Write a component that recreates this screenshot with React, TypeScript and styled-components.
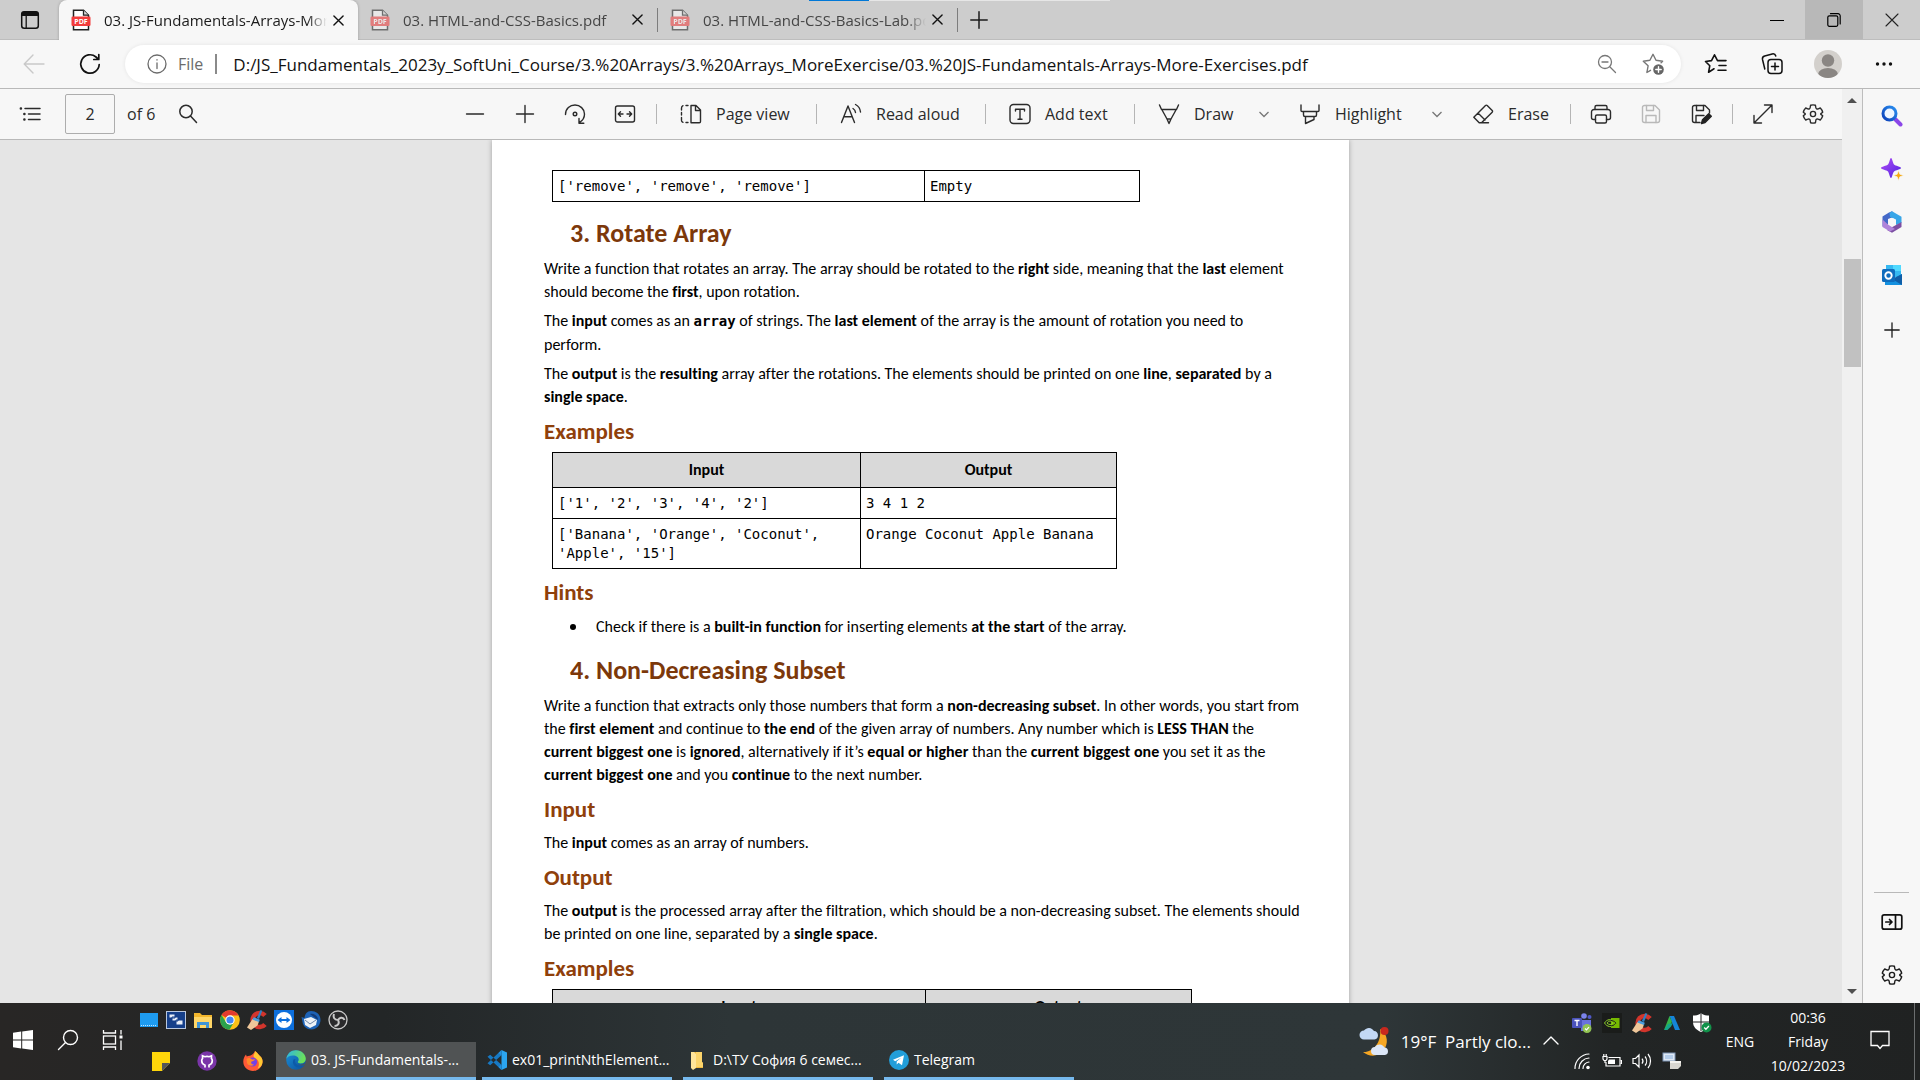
import React from 'react';
import styled, { createGlobalStyle, css } from 'styled-components';

const UI = '"Segoe UI", "Open Sans", "Noto Sans", sans-serif';
const DOC = 'Calibri, Lato, "Open Sans", sans-serif';
const MONO = 'Consolas, "DejaVu Sans Mono", monospace';

const GlobalStyle = createGlobalStyle`
  * { box-sizing: border-box; }
  body { margin: 0; font-family: ${UI}; color: #1b1b1b; background: #f7f7f7; }
  button, input { font: inherit; color: inherit; border: 0; background: none; padding: 0; margin: 0; outline: none; }
  svg { display: block; flex: none; }
`;

const Screen = styled.div`
  height: 100vh;
  display: flex;
  flex-direction: column;
  overflow: hidden;
`;

/* ---------- tab strip ---------- */

const TabStrip = styled.header`
  position: relative;
  flex: none;
  display: flex;
  height: 40px;
  background: #cdcdcd;
  border-bottom: 1px solid #bdbdbd;
`;

const LoadingBar = styled.div`
  position: absolute;
  top: 0;
  left: 809px;
  width: 301px;
  height: 1px;
  background: linear-gradient(to right, #0078d7 60px, #e6e6e6 60px);
`;

const StripButton = styled.button<{ $w: number; $active?: boolean }>`
  width: ${p => p.$w}px;
  height: 39px;
  flex: none;
  display: grid;
  place-items: center;
  ${p => p.$active && css`background: #b8b8b8;`}
`;

const Tab = styled.div<{ $active?: boolean }>`
  display: flex;
  align-items: center;
  flex: 0 1 299px;
  min-width: 0;
  height: ${p => (p.$active ? 40 : 39)}px;
  padding: 0 9px 0 12px;
  font-size: 15px;
  color: ${p => (p.$active ? '#1b1b1b' : '#454545')};
  ${p => p.$active && css`
    background: #f7f7f7;
    border-radius: 8px 8px 0 0;
    box-shadow: 0 0 3px rgba(0, 0, 0, 0.25);
    clip-path: inset(0 -4px 0 -4px);
  `}
  & > svg { opacity: ${p => (p.$active ? 1 : 0.55)}; }
`;

const TabTitle = styled.span`
  flex: 1;
  min-width: 0;
  margin-left: 13px;
  overflow: hidden;
  white-space: nowrap;
  mask-image: linear-gradient(to right, #000 calc(100% - 20px), transparent);
`;

const TabClose = styled.button`
  width: 22px;
  height: 22px;
  display: grid;
  place-items: center;
  color: #111;
`;

const TabDivider = styled.i`
  width: 1px;
  height: 24px;
  align-self: center;
  background: #7d7d7d;
`;

const Spacer = styled.div`
  flex: 1;
`;

/* ---------- address row ---------- */

const AddressRow = styled.div`
  flex: none;
  display: flex;
  align-items: center;
  height: 49px;
  padding: 0 8px 0 6px;
  background: #f7f7f7;
  border-bottom: 1px solid #b9b9b9;
`;

const NavButton = styled.button`
  width: 56px;
  height: 40px;
  flex: none;
  display: grid;
  place-items: center;
`;

const AddressBar = styled.div`
  flex: 1;
  display: flex;
  align-items: center;
  height: 38px;
  margin: 0 7px;
  padding: 0 5px 0 22px;
  border-radius: 19px;
  background: #fff;
  box-shadow: 0 0 4px rgba(0, 0, 0, 0.08);
  font-size: 17px;
`;

const Scheme = styled.span`
  margin-left: 11px;
  padding-right: 12px;
  border-right: 2px solid #8a8a8a;
  font-size: 16px;
  line-height: 20px;
  color: #6b6b6b;
`;

const UrlInput = styled.input`
  flex: 1;
  margin-left: 16px;
  color: #111;
`;

const PillButton = styled.button`
  width: 46px;
  height: 32px;
  display: grid;
  place-items: center;
`;

/* ---------- browser body ---------- */

const Body = styled.div`
  flex: 1;
  min-height: 0;
  display: flex;
`;

const Viewer = styled.main`
  flex: 1;
  min-width: 0;
  display: flex;
  flex-direction: column;
`;

const Toolbar = styled.div`
  flex: none;
  display: flex;
  align-items: center;
  height: 51px;
  padding: 0 4px 0 5px;
  background: #f7f7f7;
  border-bottom: 1px solid #b9b9b9;
  font-size: 16px;
  color: #2b2b2b;
`;

const ToolIcon = styled.button`
  width: 50px;
  height: 40px;
  flex: none;
  display: grid;
  place-items: center;
`;

const PageInput = styled.input`
  width: 50px;
  height: 40px;
  margin-left: 10px;
  border: 1px solid #adadad;
  border-radius: 2px;
  text-align: center;
`;

const PageCount = styled.label`
  width: 36px;
  margin-left: 12px;
`;

const ToolButton = styled.button<{ $w: number }>`
  width: ${p => p.$w}px;
  height: 40px;
  flex: none;
  display: flex;
  align-items: center;
  gap: 13px;
  padding: 0 11px 0 17px;
  white-space: nowrap;
`;

const Chevron = styled.svg`
  margin-left: auto;
`;

const Divider = styled.i`
  width: 1px;
  height: 20px;
  flex: none;
  margin: 0 5px 0 6px;
  background: #b5b5b5;
`;

const Canvas = styled.div`
  flex: 1;
  min-height: 0;
  overflow: hidden;
  display: flex;
  justify-content: center;
  align-items: flex-start;
  padding-right: 1px;
  background: #e5e5e5;
`;

const ScrollTrack = styled.div`
  flex: none;
  width: 21px;
  display: flex;
  flex-direction: column;
  align-items: center;
  padding: 8px 0;
  background: #f0f0f0;
  border-right: 1px solid #bdbdbd;
`;

const Thumb = styled.div`
  width: 17px;
  height: 108px;
  margin-top: 155px;
  background: #c1c1c1;
`;

const Sidebar = styled.nav`
  flex: none;
  width: 57px;
  display: flex;
  flex-direction: column;
  align-items: center;
  padding-bottom: 2px;
  background: #f7f7f7;
`;

const SideButton = styled.button<{ $gap?: number }>`
  width: 56px;
  height: 53px;
  margin-top: ${p => p.$gap ?? 0}px;
  display: grid;
  place-items: center;
`;

const SideRule = styled.hr`
  width: 35px;
  height: 1px;
  margin: auto 0 2px;
  border: 0;
  background: #b9b9b9;
`;

/* ---------- document ---------- */

const Page = styled.article`
  width: 857px;
  flex: none;
  padding: 30px 40px 60px 52px;
  background: #fff;
  box-shadow: 0 0 5px rgba(0, 0, 0, 0.3);
  font-family: ${DOC};
  font-size: 16px;
  line-height: 23px;
  font-variant-ligatures: none;
  color: #000;
  white-space: nowrap;
  h3 + p { margin-top: 9px; }
`;

const Exercise = styled.h2`
  margin: 16px 0 9px 26px;
  font-size: 26px;
  line-height: 30px;
  color: #7c380a;
`;

const Section = styled.h3`
  margin: 10px 0 8px;
  font-size: 23px;
  line-height: 26px;
  color: #8f400b;
`;

const Para = styled.p`
  margin: 0;
  & + & { margin-top: 6px; }
`;

const Hint = styled.ul`
  margin: 10px 0 17px;
  padding-left: 52px;
  list-style: none;
  li { position: relative; }
  li::before {
    content: '';
    position: absolute;
    left: -26px;
    top: 9px;
    width: 6px;
    height: 6px;
    border-radius: 50%;
    background: #000;
  }
`;

const Code = styled.b`
  font-family: ${MONO};
  font-size: 14px;
`;

const Grid = styled.table<{ $w: number }>`
  width: ${p => p.$w}px;
  margin-left: 8px;
  table-layout: fixed;
  border-collapse: collapse;
  th, td { border: 1px solid #000; }
  th { height: 35px; background: #d9d9d9; padding: 0 0 2px; }
  td {
    padding: 6px 5px 5px;
    font-family: ${MONO};
    font-size: 14px;
    line-height: 19px;
    vertical-align: top;
    white-space: pre;
  }
`;

/* ---------- taskbar ---------- */

const Taskbar = styled.footer`
  flex: none;
  display: flex;
  height: 77px;
  background: linear-gradient(to right, #282625 0%, #232627 20%, #2d3537 38%, #2e3638 72%, #222525 84%, #202222 100%);
  color: #fff;
`;

const TaskIcon = styled.button<{ $w?: number }>`
  width: ${p => p.$w ?? 45}px;
  height: 74px;
  flex: none;
  display: grid;
  place-items: center;
`;

const Launch = styled.div`
  display: flex;
  flex-direction: column;
  flex: none;
`;

const LaunchRow = styled.div`
  display: flex;
  height: 39px;
  padding: 3px 0 9px;
`;

const SmallLaunch = styled.button`
  width: 27px;
  display: grid;
  place-items: center;
`;

const Running = styled.div`
  display: flex;
  height: 38px;
  padding-left: 3px;
  align-items: stretch;
`;

const PinButton = styled.button`
  width: 46px;
  display: grid;
  place-items: center;
`;

const AppButton = styled.button<{ $w: number; $active?: boolean }>`
  display: flex;
  align-items: center;
  gap: 5px;
  width: ${p => p.$w}px;
  margin-right: ${p => (p.$active ? 6 : 11)}px;
  padding: ${p => (p.$active ? '0 10px' : '0 5px')};
  border-bottom: 3px solid #76b9ed;
  background: ${p => (p.$active ? '#505354' : 'transparent')};
  font-size: 14px;
  white-space: nowrap;
  overflow: hidden;
`;

const Weather = styled.button`
  display: flex;
  align-items: center;
  gap: 12px;
  margin-right: 3px;
  font-size: 17px;
  white-space: pre;
`;

const Tray = styled.div`
  display: grid;
  grid-template-columns: repeat(5, 30px);
  grid-template-rows: 39px 38px;
  margin-right: 4px;
`;

const TrayButton = styled.button`
  display: grid;
  place-items: center;
`;

const Lang = styled.button`
  width: 38px;
  font-size: 14px;
  padding-bottom: 1px;
`;

const Clock = styled.time`
  width: 98px;
  padding-top: 3px;
  text-align: center;
  font-size: 14px;
  line-height: 24px;
  span { display: block; }
`;

const ShowDesktop = styled.i`
  width: 6px;
  margin-left: 12px;
  border-left: 1px solid #6b6e6f;
`;

/* ---------- drawings ---------- */

type IconProps = { s?: number; w?: number; c?: string; children: React.ReactNode; box?: number };
const Line = ({ s = 24, w = 1.4, c = 'currentColor', box = 24, children }: IconProps) => (
  <svg width={s} height={s} viewBox={`0 0 ${box} ${box}`} fill="none" stroke={c} strokeWidth={w} strokeLinecap="round" strokeLinejoin="round" aria-hidden>
    {children}
  </svg>
);

const PdfIcon = () => (
  <svg width="20" height="22" viewBox="0 0 20 22" aria-hidden>
    <path d="M2.5 1.2h10l5 5v14.6h-15z" fill="#fff" stroke="#222" strokeWidth="1.5" />
    <path d="M12.5 1.2v5h5" fill="#ddd" stroke="#222" strokeWidth="1.3" />
    <rect x="0.5" y="7.5" width="19" height="9.5" rx="1.2" fill="#f23c3c" />
    <text x="10" y="14.9" textAnchor="middle" fontSize="7" fontWeight="700" fontFamily="Open Sans" fill="#fff">PDF</text>
  </svg>
);

const Cross = ({ s = 11, w = 1.5 }) => (
  <Line s={s} w={w} box={12}><path d="M1 1l10 10M11 1L1 11" /></Line>
);

const Gear = () => (
  <Line s={24} w={1.4}>
    <circle cx="12" cy="12" r="2.6" />
    <path d="M9.6 3.2a9.4 9.4 0 0 1 4.8 0l.4 2.3a1.7 1.7 0 0 0 2.4 1.4l2.1-.9a9.2 9.2 0 0 1 2.4 4.2l-1.8 1.4a.5.5 0 0 0 0 .8l1.8 1.4a9.2 9.2 0 0 1-2.4 4.2l-2.1-.9a1.7 1.7 0 0 0-2.4 1.4l-.4 2.3a9.4 9.4 0 0 1-4.8 0l-.4-2.3a1.7 1.7 0 0 0-2.4-1.4l-2.1.9a9.2 9.2 0 0 1-2.4-4.2l1.8-1.4a.5.5 0 0 0 0-.8l-1.8-1.4A9.2 9.2 0 0 1 4.7 6l2.1.9a1.7 1.7 0 0 0 2.4-1.4z" />
  </Line>
);

const Floppy = ({ edit = false, c = 'currentColor' }) => (
  <Line c={c}>
    <path d={edit ? 'M11 20.5H5.5A2 2 0 0 1 3.5 18.5V5.5A2 2 0 0 1 5.5 3.5H16L20.5 8V11' : 'M5.5 3.5H16L20.5 8V18.5A2 2 0 0 1 18.5 20.5H5.5A2 2 0 0 1 3.5 18.5V5.5A2 2 0 0 1 5.5 3.5z'} />
    <path d="M7.5 3.5V8.5H14.5V3.5" />
    <path d={edit ? 'M7 20V13.5H15' : 'M7 20.5V13.5H17V20.5'} />
    {edit && <path d="M12.5 21.5l1-3.8 6.2-6 2.6 2.6-6.2 6.2z" fill="#222" stroke="#222" />}
  </Line>
);

const ChevronDown = () => (
  <Chevron width="12" height="12" viewBox="0 0 12 12" fill="none" stroke="#777" strokeWidth="1.3" aria-hidden>
    <path d="M1.5 4l4.5 4.5L10.5 4" />
  </Chevron>
);

const CCleaner = () => (
  <svg width="20" height="20" viewBox="0 0 20 20" aria-hidden>
    <path d="M18 5.5A7 7 0 1 0 18 14.5" fill="none" stroke="#d2352c" strokeWidth="4.6" />
    <path d="M13.5 0l1.8.7L12 9l-2.200-.9z" fill="#2e7fc4" />
    <path d="M5.5 9l6.5 2.5-1.500 4L4 20l-4-2.500z" fill="#efc79a" />
    <path d="M6.8 7.2l6 2.5-.8 2.300-6.700-2.500z" fill="#4a9fe0" />
  </svg>
);

const EdgeLogo = () => (
  <svg width="20" height="20" viewBox="0 0 20 20" aria-hidden>
    <defs>
      <linearGradient id="edgeA" x1="0" y1="0" x2="1" y2=".3"><stop offset="0" stopColor="#2cb4e8" /><stop offset="1" stopColor="#6be05a" /></linearGradient>
      <linearGradient id="edgeB" x1="0" y1="0" x2="1" y2="1"><stop offset="0" stopColor="#1a8fd8" /><stop offset="1" stopColor="#0c4f9a" /></linearGradient>
    </defs>
    <circle cx="10" cy="10" r="9.8" fill="url(#edgeB)" />
    <path d="M.3 9C1 3.600 5 .2 10 .2c5.800 0 9.800 4.300 9.800 8.600 0 3-2.300 4.700-4.800 4.700-2.300 0-3.200-.9-3.200-1.500 0-.7.9-1 .9-2.500C12.700 7.500 10.500 5.500 7 5.500 3.500 5.500 1 7.300.3 9z" fill="url(#edgeA)" />
    <path d="M7.500 9.500c-1.800 4 1 8 5.500 8 2.500 0 4.500-1 5.500-2.500-2 1-5 1.200-7.500-.5-1.800-1.200-2.500-3.500-1.500-5.500z" fill="#0d5aa8" />
    <path d="M19 14.200c-2 1.800-6 1.600-8-.4 1.500 1.200 5 1.400 7-.6z" fill="#505354" />
  </svg>
);

const VsCode = () => (
  <svg width="20" height="20" viewBox="0 0 20 20" aria-hidden>
    <path d="M14.5 0L20 2.400v15.200L14.500 20z" fill="#2ba5f0" />
    <path d="M14.5 0v5.200L3.200 15.300.5 13.200zM14.500 20v-5.200L3.200 4.700.5 6.800z" fill="#1779c4" />
    <path d="M14.5 0l-3 3 3 2.500zM14.500 20l-3-3 3-2.500z" fill="#2590dc" />
  </svg>
);

const Firefox = () => (
  <svg width="20" height="20" viewBox="0 0 20 20" aria-hidden>
    <path d="M12 0c3 2 3.500 4 5.500 5.500C19 7 19.800 9 19.500 11.500 19 16.500 15 20 10 20S.5 16.500.3 11C.2 8 1.300 5.500 3 3.500l.7 2C5 4.800 6 4.600 7 4.800 9 3.500 11 3 12 0z" fill="#ff5a36" />
    <path d="M12 0c3 2 3.500 4 5.500 5.500C19 7 19.800 9 19.500 11.500 19 14.500 17 17 14.500 17.500c2-3 2-7.500-1-9.500-1.500-1-3-1.500-3-3.500C11 3 12 2 12 0z" fill="#ffc832" />
    <circle cx="9.5" cy="11" r="4.6" fill="#7542e5" />
    <path d="M3.500 8c2-1.500 4-1 5.500.5l3-.2c-.5 1.500-2 2-3.500 2.200-1 1.500 0 3.200 2.500 3-1.500 2-6 1.500-7-1.500z" fill="#ff8a2a" />
  </svg>
);

const App = () => (
  <Screen>
    <GlobalStyle />
    <TabStrip>
      <LoadingBar />
      <StripButton $w={59} aria-label="Tab actions">
        <svg width="20" height="20" viewBox="0 0 20 20" aria-hidden>
          <rect x="1.7" y="1.7" width="16.6" height="16.6" rx="2.5" fill="none" stroke="#111" strokeWidth="1.5" />
          <path d="M1.5 3.500a2.500 2.500 0 0 1 2-2h13a2.500 2.500 0 0 1 2 2V6h-17z" fill="#111" />
          <path d="M6.200 6v12" stroke="#111" strokeWidth="1.3" />
        </svg>
      </StripButton>
      <Tab $active>
        <PdfIcon />
        <TabTitle>03. JS-Fundamentals-Arrays-More-Exercises.pdf</TabTitle>
        <TabClose aria-label="Close tab"><Cross /></TabClose>
      </Tab>
      <Tab>
        <PdfIcon />
        <TabTitle>03. HTML-and-CSS-Basics.pdf</TabTitle>
        <TabClose aria-label="Close tab"><Cross /></TabClose>
      </Tab>
      <TabDivider />
      <Tab>
        <PdfIcon />
        <TabTitle>03. HTML-and-CSS-Basics-Lab.pdf</TabTitle>
        <TabClose aria-label="Close tab"><Cross /></TabClose>
      </Tab>
      <TabDivider />
      <StripButton $w={42} aria-label="New tab">
        <Line s={18} w={1.5} box={18}><path d="M9 .8v16.400M.8 9h16.400" /></Line>
      </StripButton>
      <Spacer />
      <StripButton $w={57} aria-label="Minimize"><Line s={14} w={1.2} box={14} c="#000"><path d="M.5 7.500h13" /></Line></StripButton>
      <StripButton $w={58} $active aria-label="Restore">
        <Line s={14} w={1.2} box={14} c="#000"><rect x=".8" y="2.8" width="10" height="10.5" rx="1.5" /><path d="M3.500 .7h7.500a2.200 2.200 0 0 1 2.200 2.200v8" /></Line>
      </StripButton>
      <StripButton $w={57} aria-label="Close"><Line s={14} w={1.1} box={14} c="#222"><path d="M1 1l12 12M13 1L1 13" /></Line></StripButton>
    </TabStrip>

    <AddressRow>
      <NavButton aria-label="Back"><Line w={1.4} c="#c9c9c9"><path d="M22 12H2.500M11 3L2.200 12 11 21" /></Line></NavButton>
      <NavButton aria-label="Refresh">
        <Line w={1.7} c="#111"><path d="M21.200 12.500a9.200 9.200 0 1 1-3.200-7.500l2.500 2.300M20.800 2.500v5h-5" /></Line>
      </NavButton>
      <AddressBar>
        <Line s={20} w={1.3} c="#6b6b6b" box={20}><circle cx="10" cy="10" r="9" /><path d="M10 9v5.500M10 5.700v.3" /></Line>
        <Scheme>File</Scheme>
        <UrlInput aria-label="Address" defaultValue="D:/JS_Fundamentals_2023y_SoftUni_Course/3.%20Arrays/3.%20Arrays_MoreExercise/03.%20JS-Fundamentals-Arrays-More-Exercises.pdf" />
        <PillButton aria-label="Zoom out">
          <Line s={20} w={1.3} c="#777" box={20}><circle cx="8" cy="8" r="6.5" /><path d="M13 13l5.500 5.500M5 8h6" /></Line>
        </PillButton>
        <PillButton aria-label="Add to favorites">
          <Line s={24} w={1.4} c="#777">
            <path d="M9.500 18.300l-3.600 2.200 1.200-6.700L2.300 9.200l6.600-.9L12 2.300l3 6 6.600.9-1.500 1.500" />
            <circle cx="17.5" cy="17.5" r="5.3" fill="#666" stroke="none" />
            <path d="M17.500 14.800v5.400M14.800 17.500h5.400" stroke="#fff" />
          </Line>
        </PillButton>
      </AddressBar>
      <NavButton aria-label="Favorites">
        <Line w={1.6} c="#111"><path d="M10 16.800l-5.400 3.400 1.200-6.500L1.500 9.500l6-.9L10.500 2.800l3 5.800h8.500M15 13.500h7M14 18.200h8" /></Line>
      </NavButton>
      <NavButton aria-label="Collections">
        <Line w={1.5} c="#111"><rect x="8" y="7.5" width="14" height="14" rx="3" /><path d="M15 11v7M11.500 14.500h7M4.800 17L2.500 7.500a3 3 0 0 1 2.200-3.500l7.500-2a3 3 0 0 1 3.600 2" /></Line>
      </NavButton>
      <NavButton aria-label="Profile">
        <svg width="28" height="28" viewBox="0 0 28 28" aria-hidden>
          <defs><clipPath id="face"><circle cx="14" cy="14" r="14" /></clipPath></defs>
          <g clipPath="url(#face)"><rect width="28" height="28" fill="#d3d0cc" /><circle cx="14" cy="10.5" r="6.2" fill="#8a8683" /><ellipse cx="14" cy="24" rx="9.8" ry="6" fill="#8a8683" /></g>
        </svg>
      </NavButton>
      <NavButton aria-label="Settings and more">
        <Line w={0} box={24}><g fill="#111"><circle cx="5.5" cy="12" r="1.7" /><circle cx="12" cy="12" r="1.7" /><circle cx="18.5" cy="12" r="1.7" /></g></Line>
      </NavButton>
    </AddressRow>

    <Body>
      <Viewer>
        <Toolbar>
          <ToolIcon aria-label="Contents">
            <Line s={22} box={22} w={1.5}><path d="M6 5.500h15M9.500 11H21M9.500 16.500H21" /><path d="M1.800 5.500h.2M5.300 11h.2M5.300 16.500h.2" strokeWidth="2.4" /></Line>
          </ToolIcon>
          <PageInput id="page" defaultValue="2" aria-label="Page number" />
          <PageCount htmlFor="page">of 6</PageCount>
          <ToolIcon aria-label="Find"><Line s={20} box={20} w={1.5}><circle cx="8" cy="7.5" r="6.2" /><path d="M12.500 12l6 6.500" /></Line></ToolIcon>
          <Spacer />
          <ToolIcon aria-label="Zoom out"><Line s={20} box={20}><path d="M1.500 10h17" /></Line></ToolIcon>
          <ToolIcon aria-label="Zoom in"><Line s={20} box={20}><path d="M1.500 10h17M10 1.500v17" /></Line></ToolIcon>
          <ToolIcon aria-label="Rotate">
            <Line><path d="M2.500 12.500C2.500 6.500 7 3 12 3s9.500 4 9.500 9-2.500 7-5 8.500M16 16.500v4.700h4.800" /><circle cx="12" cy="12" r="1.8" /></Line>
          </ToolIcon>
          <ToolIcon aria-label="Fit to width">
            <Line s={22} box={22}><rect x="1.5" y="3" width="19" height="16" rx="2" /><path d="M9 11H4.500M6.500 8.800L4.300 11l2.200 2.200M13 11h4.500M15.500 8.800l2.200 2.200-2.200 2.200" /></Line>
          </ToolIcon>
          <Divider />
          <ToolButton $w={148}>
            <Line><path d="M12 3.500h5l4.500 4.500v11.500a1.200 1.200 0 0 1-1.200 1.200H12zM16.500 3.700V8.500h4.800" /><path d="M9 20.500H7M9 3.500H7M2.500 18v-2.500M2.500 13v-2.500M2.500 8V6a2.500 2.500 0 0 1 1.500-2.300M4 20.300a2.500 2.500 0 0 1-1.500-1.500" /></Line>
            Page view
          </ToolButton>
          <Divider />
          <ToolButton $w={157}>
            <Line><path d="M2.500 20.500L9 4l6.500 16.500M4.800 14.800h8.400M14 6.500a5 5 0 0 1 2.500 4M16.500 2.500A9.500 9.500 0 0 1 21.500 10" /></Line>
            Read aloud
          </ToolButton>
          <Divider />
          <ToolButton $w={137}>
            <Line><rect x="2" y="2.5" width="20" height="19" rx="3.5" /><path d="M7.500 9V7.200h9V9M12 7.200v10M10 17.200h4" /></Line>
            Add text
          </ToolButton>
          <Divider />
          <ToolButton $w={141}>
            <Line><path d="M2.500 3l2 4.500h15l2-4.500M4.800 7.500l5.200 9.500h4l5.200-9.500M10 17l2 4.500L14 17" /></Line>
            Draw<ChevronDown />
          </ToolButton>
          <ToolButton $w={173}>
            <Line><path d="M3 3v5.500a1 1 0 0 0 1 1h16a1 1 0 0 0 1-1V3M5.500 9.500V13a1.500 1.500 0 0 0 1.500 1.500h10a1.500 1.500 0 0 0 1.500-1.500V9.500M7.500 14.500v7l8.500-4v-3" /></Line>
            Highlight<ChevronDown />
          </ToolButton>
          <ToolButton $w={110}>
            <Line><path d="M2.800 15.200L14.500 3.500a1.200 1.200 0 0 1 1.700 0l5 5a1.200 1.200 0 0 1 0 1.700L10.500 20.800H8.200L2.800 15.200zM7 11l7 7M10.500 20.800h7" /></Line>
            Erase
          </ToolButton>
          <Divider />
          <ToolIcon aria-label="Print">
            <Line><path d="M6.500 17.500H4.500a2 2 0 0 1-2-2V10a2.500 2.500 0 0 1 2.500-2.500h14A2.500 2.500 0 0 1 21.500 10v5.500a2 2 0 0 1-2 2h-2" /><path d="M6 7.500V5a1.500 1.500 0 0 1 1.500-1.500h9A1.500 1.500 0 0 1 18 5v2.500" /><rect x="6.5" y="13" width="11" height="8" rx="1.5" /></Line>
          </ToolIcon>
          <ToolIcon aria-label="Save"><Floppy c="#b9b9b9" /></ToolIcon>
          <ToolIcon aria-label="Save as"><Floppy edit /></ToolIcon>
          <Divider />
          <ToolIcon aria-label="Full screen"><Line s={22} box={22}><path d="M2.500 19.500l17-17M12.500 2h7.500v7.500M2 12.500V20h7.500" /></Line></ToolIcon>
          <ToolIcon aria-label="Settings"><Gear /></ToolIcon>
        </Toolbar>

        <Canvas>
          <Page>
            <Grid $w={588}>
              <colgroup><col style={{ width: 372 }} /><col /></colgroup>
              <tbody><tr><td>{"['remove', 'remove', 'remove']"}</td><td>Empty</td></tr></tbody>
            </Grid>
            <Exercise>3. Rotate Array</Exercise>
            <Para>
              Write a function that rotates an array. The array should be rotated to the <b>right</b> side, meaning that the <b>last</b> element<br />
              should become the <b>first</b>, upon rotation.
            </Para>
            <Para>
              The <b>input</b> comes as an <Code>array</Code> of strings. The <b>last element</b> of the array is the amount of rotation you need to<br />
              perform.
            </Para>
            <Para>
              The <b>output</b> is the <b>resulting</b> array after the rotations. The elements should be printed on one <b>line</b>, <b>separated</b> by a<br />
              <b>single space</b>.
            </Para>
            <Section>Examples</Section>
            <Grid $w={565}>
              <colgroup><col style={{ width: 308 }} /><col /></colgroup>
              <thead><tr><th>Input</th><th>Output</th></tr></thead>
              <tbody>
                <tr><td>{"['1', '2', '3', '4', '2']"}</td><td>3 4 1 2</td></tr>
                <tr><td>{"['Banana', 'Orange', 'Coconut',\n'Apple', '15']"}</td><td>Orange Coconut Apple Banana</td></tr>
              </tbody>
            </Grid>
            <Section>Hints</Section>
            <Hint><li>Check if there is a <b>built-in function</b> for inserting elements <b>at the start</b> of the array.</li></Hint>
            <Exercise>4. Non-Decreasing Subset</Exercise>
            <Para>
              Write a function that extracts only those numbers that form a <b>non-decreasing subset</b>. In other words, you start from<br />
              the <b>first element</b> and continue to <b>the end</b> of the given array of numbers. Any number which is <b>LESS THAN</b> the<br />
              <b>current biggest one</b> is <b>ignored</b>, alternatively if it’s <b>equal or higher</b> than the <b>current biggest one</b> you set it as the<br />
              <b>current biggest one</b> and you <b>continue</b> to the next number.
            </Para>
            <Section>Input</Section>
            <Para>The <b>input</b> comes as an array of numbers.</Para>
            <Section>Output</Section>
            <Para>
              The <b>output</b> is the processed array after the filtration, which should be a non-decreasing subset. The elements should<br />
              be printed on one line, separated by a <b>single space</b>.
            </Para>
            <Section>Examples</Section>
            <Grid $w={640}>
              <colgroup><col style={{ width: 373 }} /><col /></colgroup>
              <thead><tr><th>Input</th><th>Output</th></tr></thead>
            </Grid>
          </Page>
        </Canvas>
      </Viewer>

      <ScrollTrack>
        <svg width="10" height="7" viewBox="0 0 10 7" aria-hidden><path d="M0 6l5-5 5 5z" fill="#505050" /></svg>
        <Thumb />
        <Spacer />
        <svg width="10" height="7" viewBox="0 0 10 7" aria-hidden><path d="M0 1l5 5 5-5z" fill="#505050" /></svg>
      </ScrollTrack>

      <Sidebar>
        <SideButton aria-label="Search">
          <svg width="22" height="22" viewBox="0 0 22 22" aria-hidden>
            <defs><linearGradient id="lens" x1="0" y1="1" x2="1" y2="0"><stop offset="0" stopColor="#0b3fb8" /><stop offset="1" stopColor="#2a8ff0" /></linearGradient></defs>
            <path d="M14 14l5.500 5.500" stroke="#8b46e8" strokeWidth="4" strokeLinecap="round" />
            <circle cx="8.5" cy="8.5" r="6.5" fill="#eef6ff" stroke="url(#lens)" strokeWidth="3" />
          </svg>
        </SideButton>
        <SideButton aria-label="Discover">
          <svg width="24" height="24" viewBox="0 0 24 24" aria-hidden>
            <defs><linearGradient id="spark" x1="0" y1="0" x2="1" y2="1"><stop offset="0" stopColor="#b34df5" /><stop offset="1" stopColor="#4b22e0" /></linearGradient></defs>
            <path d="M11 1c1.200 0 1.800 5 3 6.500S21 9.500 21 11s-5.500 2-7 3.500S12.200 21 11 21s-1.800-5-3-6.500S1 12.500 1 11s5.500-2 7-3.500S9.800 1 11 1z" fill="url(#spark)" />
            <path d="M18.500 13.500l1.300 3.700 3.700 1.300-3.700 1.300-1.300 3.700-1.300-3.700-3.700-1.300 3.700-1.300z" fill="#f5a912" stroke="#f7f7f7" strokeWidth=".6" />
          </svg>
        </SideButton>
        <SideButton aria-label="Microsoft 365">
          <svg width="22" height="24" viewBox="0 0 22 24" aria-hidden>
            <path d="M11 1.200l-3 1.300L1.500 6.500v10L7 14.500V9l8-3z" fill="#4468c8" />
            <path d="M11 1.200L20.500 6.800v6L15 15V9.500L9 7 8.500 3z" fill="#38a6e8" />
            <path d="M20.500 12V17L11 22.700 6 20l9-5z" fill="#7d4fa3" />
            <path d="M1.500 9.500v7.500L9 21.500 14 19l-7-4.500z" fill="#b083da" />
            <circle cx="11" cy="12" r="3.8" fill="#f7f7f7" />
          </svg>
        </SideButton>
        <SideButton aria-label="Outlook">
          <svg width="22" height="22" viewBox="0 0 22 22" aria-hidden>
            <rect x="5" y="1" width="15" height="12" fill="#35b8f1" /><path d="M12 1h8v6h-8z" fill="#50d9ff" />
            <path d="M4 10l9 5 8-5v11H4z" fill="#1490df" /><path d="M21 10v11L11 15z" fill="#0f5ea8" />
            <rect x="1" y="5" width="13" height="13" rx="1.5" fill="#0f6cbd" />
            <circle cx="7.5" cy="11.5" r="3.2" fill="none" stroke="#fff" strokeWidth="1.9" />
          </svg>
        </SideButton>
        <SideButton $gap={2} aria-label="Add"><Line s={16} box={16} w={1.3}><path d="M8 .8v14.400M.8 8h14.400" /></Line></SideButton>
        <SideRule />
        <SideButton aria-label="Hide sidebar">
          <Line s={22} box={22} w={1.7} c="#111"><rect x="1.2" y="3.8" width="19.6" height="14.4" rx="2" /><path d="M14.500 4v14M4.800 11h6M8.500 8.500L11 11l-2.500 2.500" /></Line>
        </SideButton>
        <SideButton aria-label="Sidebar settings"><Gear /></SideButton>
      </Sidebar>
    </Body>

    <Taskbar>
      <TaskIcon aria-label="Start">
        <svg width="20" height="20" viewBox="0 0 20 20" fill="#fff" aria-hidden><path d="M0 2.800l8.200-1.200v8H0zM9.200 1.400L20 0v9.600H9.200zM0 10.500h8.200v8L0 17.300zM9.200 10.500H20V20L9.200 18.600z" /></svg>
      </TaskIcon>
      <TaskIcon aria-label="Search"><Line s={22} box={22} w={1.4}><circle cx="13.5" cy="8.5" r="7" /><path d="M8.500 13.500L1.500 20.500" /></Line></TaskIcon>
      <TaskIcon aria-label="Task view">
        <svg width="22" height="20" viewBox="0 0 22 20" fill="none" stroke="#fff" strokeWidth="1.3" aria-hidden><path d="M1.500 0v3h12V0M1.500 20v-3h12v3" /><rect x="1.5" y="6" width="12" height="8" /><path d="M19 0v4.500M19 10.500V20" /><path d="M17.500 5.500h3v3h-3z" fill="#fff" stroke="none" /></svg>
      </TaskIcon>
      <Launch>
        <LaunchRow>
          <SmallLaunch aria-label="Show desktop"><svg width="18" height="14" viewBox="0 0 18 14" aria-hidden><rect width="18" height="14" fill="#1e9bf0" /><path d="M1 12.500h16" stroke="#bfe4ff" strokeDasharray="1 1" /></svg></SmallLaunch>
          <SmallLaunch aria-label="Switch windows"><svg width="20" height="18" viewBox="0 0 20 18" aria-hidden><rect x=".5" y=".5" width="19" height="17" fill="#153f8a" stroke="#b9c7dd" /><path d="M3 3h6v4H3zM6 6h6v4H6zM10 9h7v5h-7z" fill="#e8eef8" stroke="#153f8a" /></svg></SmallLaunch>
          <SmallLaunch aria-label="File Explorer"><svg width="20" height="18" viewBox="0 0 20 18" aria-hidden><path d="M1 2h6l2 2h10v12H1z" fill="#f3b62c" /><path d="M1 6h18v11H1z" fill="#ffd667" /><path d="M4 17v-6h12v6h-3v-3H7v3z" fill="#3f94d6" /></svg></SmallLaunch>
          <SmallLaunch aria-label="Chrome">
            <svg width="20" height="20" viewBox="0 0 20 20" aria-hidden><circle cx="10" cy="10" r="9.8" fill="#fbc116" /><path d="M1.500 5A9.800 9.800 0 0 0 9.500 19.800L14 12l-7.500 1z" fill="#2ba24c" /><path d="M10 10L1.500 5A9.800 9.800 0 0 1 18.500 5.500H10z" fill="#e33b2e" /><circle cx="10" cy="10" r="4.7" fill="#fff" /><circle cx="10" cy="10" r="3.6" fill="#4285f4" /></svg>
          </SmallLaunch>
          <SmallLaunch aria-label="CCleaner"><CCleaner /></SmallLaunch>
          <SmallLaunch aria-label="TeamViewer"><svg width="20" height="20" viewBox="0 0 20 20" aria-hidden><rect width="20" height="20" fill="#0d6fdc" /><circle cx="10" cy="10" r="8" fill="#fff" /><path d="M3.500 10l4-3v2h5V7l4 3-4 3v-2h-5v2z" fill="#0d6fdc" /></svg></SmallLaunch>
          <SmallLaunch aria-label="Thunderbird"><svg width="20" height="20" viewBox="0 0 20 20" aria-hidden><path d="M10 1c6 0 9.500 4 9.500 9s-4 9.500-9 9.500S2 16 1.500 12L.5 7l3 1C4 4 6 1 10 1z" fill="#1d62b5" /><path d="M3 9l7-2 6 3-1 5-6 3-5-3z" fill="#eef2f7" /><path d="M4 10l5 4 6-4" fill="none" stroke="#6e87a8" /><path d="M9 4c4-1 8 2 8 6l-4-3z" fill="#123b7a" /></svg></SmallLaunch>
          <SmallLaunch aria-label="OBS Studio"><svg width="20" height="20" viewBox="0 0 20 20" fill="none" stroke="#c9c9c9" strokeWidth="1.3" aria-hidden><circle cx="10" cy="10" r="9" fill="#2a2a2c" /><path d="M10 10c-4 0-5-3-4-6M10 10c2-3.500 5.500-2.500 6.500 0M10 10c2 3.500-.5 6-3.500 6" strokeWidth="2" /></svg></SmallLaunch>
        </LaunchRow>
        <Running>
          <PinButton aria-label="Sticky Notes"><svg width="18" height="19" viewBox="0 0 18 19" aria-hidden><path d="M0 0h18v11l-8 8H0z" fill="#ffd60a" /><path d="M10 11h8l-8 8z" fill="#54565a" /></svg></PinButton>
          <PinButton aria-label="GitHub Desktop"><svg width="20" height="20" viewBox="0 0 20 20" aria-hidden><circle cx="10" cy="10" r="9.7" fill="#7a35a8" /><path d="M8 16.500v-2.300c-2-.7-3.300-2.200-3.300-4.400 0-1 .3-1.800.9-2.500L5.500 4.800l2.300.9a8 8 0 0 1 4.400 0l2.300-.9-.1 2.500c.6.700.9 1.500.9 2.500 0 2.200-1.300 3.700-3.300 4.400v2.300" fill="none" stroke="#fff" strokeWidth="1.7" /></svg></PinButton>
          <PinButton aria-label="Firefox"><Firefox /></PinButton>
          <AppButton $w={200} $active><EdgeLogo />03. JS-Fundamentals-...</AppButton>
          <AppButton $w={190}><VsCode />ex01_printNthElement...</AppButton>
          <AppButton $w={190}>
            <svg width="20" height="20" viewBox="0 0 20 20" aria-hidden><path d="M3 2h11v10l1 1v5H3z" fill="#f0b93d" /><path d="M3 2h3l2 2v14l-3 2-2-2z" fill="#ffe59a" /><path d="M8 2h6v10l1 1v4H8z" fill="#fbd46b" /></svg>
            D:\ТУ София 6 семес...
          </AppButton>
          <AppButton $w={190}>
            <svg width="20" height="20" viewBox="0 0 20 20" aria-hidden><circle cx="10" cy="10" r="10" fill="#229ed9" /><path d="M4 9.800l11-4.500-2 10-3.500-2.500-1.800 1.700V11.500l4.500-3.800-6 3.500z" fill="#fff" /></svg>
            Telegram
          </AppButton>
        </Running>
      </Launch>
      <Spacer />
      <Weather>
        <svg width="30" height="32" viewBox="0 0 30 32" aria-hidden>
          <path d="M21 3c8 5 9 15 3 22-5 6-14 6-20 1 9 1 19-9 17-23z" fill="#f5a623" />
          <circle cx="25.5" cy="5" r="4" fill="#c8281e" />
          <path d="M5 13.500a4.500 4.500 0 0 1 0-9A6 6 0 0 1 15 5a4.300 4.300 0 0 1 .5 8.500z" fill="#c3d8f5" />
          <path d="M16 29a4 4 0 0 1 0-8 5.500 5.500 0 0 1 9.500.5 3.800 3.800 0 0 1 .5 7.500z" fill="#dce7f8" />
        </svg>
        {'19°F  Partly clo...'}
      </Weather>
      <TaskIcon $w={33} aria-label="Show hidden icons"><Line s={16} box={16} w={1.4}><path d="M1 12l7-7 7 7" /></Line></TaskIcon>
      <Tray>
        <TrayButton aria-label="Teams"><svg width="20" height="20" viewBox="0 0 20 20" aria-hidden><circle cx="12" cy="3" r="2.8" fill="#7b83eb" /><circle cx="17.5" cy="4" r="2" fill="#5059c9" /><path d="M9 7h10v8l-4 3H9z" fill="#6a72dc" /><rect y="5" width="10" height="10" rx="1" fill="#4b53bc" /><path d="M2.500 7.500h5M5 7.500V13" stroke="#fff" strokeWidth="1.4" /><circle cx="15" cy="15.5" r="4.5" fill="#92c353" /><path d="M13 15.500l1.500 1.500 2.500-2.800" stroke="#fff" fill="none" strokeWidth="1.2" /></svg></TrayButton>
        <TrayButton aria-label="NVIDIA"><svg width="20" height="20" viewBox="0 0 20 20" aria-hidden><rect width="20" height="20" fill="#1a1c1a" /><path d="M9 5h8.500v10H9z" fill="#76b900" /><path d="M2.500 10C5 6 9 5.500 12.500 9M2.500 10c2.500 4 7 5 11 1M5 10c2-2.500 4-2.500 6 0-2 2-4 2-6 0z" stroke="#8ed02a" fill="none" /><path d="M9 7.500c3 0 5 2.500 5 2.500s-2 3-5 3" stroke="#1a1c1a" fill="none" /></svg></TrayButton>
        <TrayButton aria-label="CCleaner"><CCleaner /></TrayButton>
        <TrayButton aria-label="Autodesk"><svg width="18" height="18" viewBox="0 0 18 18" aria-hidden><path d="M6.500 2h4.500l6 14h-5z" fill="#1585d8" /><path d="M1 16L6.500 2 9 8l-3 4z" fill="#36b449" /><path d="M1 16l4-6 5-1-2 3.500-3.500 3.500z" fill="#14a58a" /></svg></TrayButton>
        <TrayButton aria-label="Windows Security"><svg width="20" height="20" viewBox="0 0 20 20" aria-hidden><path d="M9 .5c3 1.800 5.500 2 8 2V9c0 5-3.500 8-8 10-4.500-2-8-5-8-10V2.500c2.500 0 5-.2 8-2z" fill="#fff" /><path d="M9 1v17M1 9h16" stroke="#222" /><circle cx="14.5" cy="14.5" r="5" fill="#12924a" /><path d="M12.200 14.500l1.700 1.700 3-3.200" stroke="#fff" fill="none" strokeWidth="1.3" /></svg></TrayButton>
        <TrayButton aria-label="Wi-Fi"><Line s={18} box={18} w={1.2}><path d="M2 16.500A14.500 14.500 0 0 1 16 2M6 16.500A10.500 10.500 0 0 1 16 6M10 16.500A6.500 6.500 0 0 1 16 10" /><circle cx="15" cy="15.5" r="1.2" fill="#fff" /></Line></TrayButton>
        <TrayButton aria-label="Battery"><svg width="20" height="16" viewBox="0 0 20 16" fill="none" stroke="#fff" strokeWidth="1.2" aria-hidden><path d="M6.500 4.500H18v8.500H4V9" /><path d="M18.500 7.500h1v3h-1" /><path d="M7 6.500h6V11H6V8z" fill="#fff" stroke="none" /><path d="M1 3.500h4V6L4 7.500H2L1 6zM1.800 1v2M4.200 1v2M3 7.500V10" /></svg></TrayButton>
        <TrayButton aria-label="Volume"><svg width="20" height="18" viewBox="0 0 20 18" fill="none" stroke="#fff" strokeWidth="1.2" aria-hidden><path d="M1 6.500h2.500L7 3v12l-3.500-3.500H1zM10 6.500a4 4 0 0 1 0 5M13 4.500a7 7 0 0 1 0 9M16 2a11 11 0 0 1 0 14" /></svg></TrayButton>
        <TrayButton aria-label="Devices"><svg width="20" height="18" viewBox="0 0 20 18" aria-hidden><rect x="1" y="1" width="12" height="8" fill="#dfe9f5" stroke="#7f96b5" /><rect x="3" y="3" width="8" height="4" fill="#b4cdea" /><path d="M8 9h11v5l-3 3H8z" fill="#d8d6d0" /><path d="M8 9h11v2H8z" fill="#f3f2ee" /></svg></TrayButton>
      </Tray>
      <Lang>ENG</Lang>
      <Clock><span>00:36</span><span>Friday</span><span>10/02/2023</span></Clock>
      <TaskIcon aria-label="Notifications"><Line s={20} box={20} w={1.3}><path d="M1 1.500h18v14h-6.500L10 18.500l-2.500-3H1z" strokeLinejoin="miter" /></Line></TaskIcon>
      <ShowDesktop />
    </Taskbar>
  </Screen>
);

export default App;
